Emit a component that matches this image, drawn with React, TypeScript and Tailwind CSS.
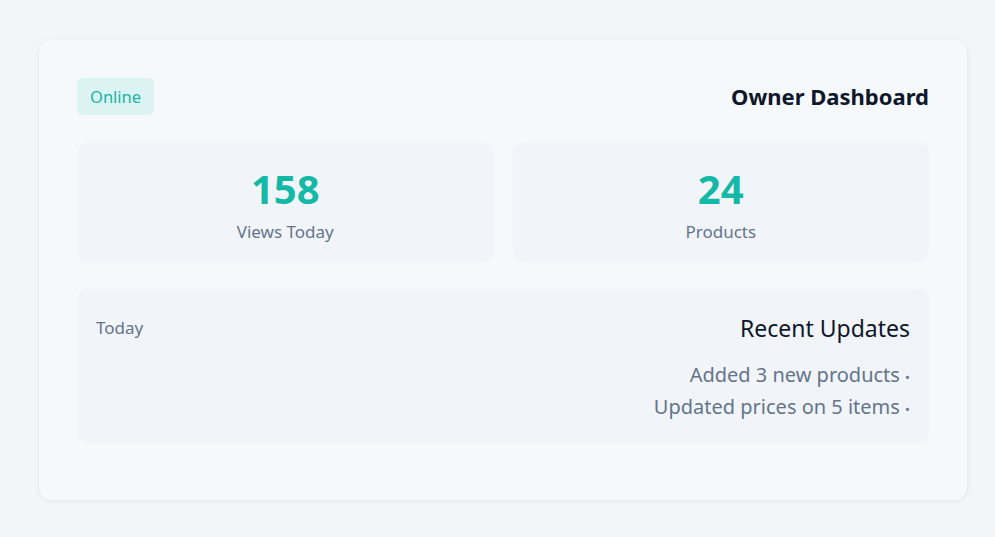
const updates = ["Added 3 new products", "Updated prices on 5 items"];

const stats = [
  { value: "158", label: "Views Today" },
  { value: "24", label: "Products" },
];

export default function App() {
  return (
    <div
      className="min-h-[537px] bg-[#f2f6f9] pt-10 pl-[39px]"
      style={{ fontFamily: '"Noto Sans", "Open Sans", sans-serif' }}
    >
      <div className="w-[928px] rounded-xl bg-[#f5f9fc] px-[38px] pt-[38px] pb-[57px] shadow-[0_1px_4px_rgba(15,23,42,0.08)]">
        <div className="flex items-center justify-between">
          <span className="rounded-md bg-[#ddf3f3] px-[13px] py-[7px] text-[16.5px] leading-[23px] text-[#14b8a6]">
            Online
          </span>
          <h1 className="pb-[2px] text-[22px] font-bold leading-[28px] text-[#0f172a]">Owner Dashboard</h1>
        </div>

        <div className="mt-[27px] grid grid-cols-2 gap-[19px]">
          {stats.map((s) => (
            <div
              key={s.label}
              className="flex h-[120px] flex-col items-center justify-center rounded-xl bg-[#f1f5f9] pt-[4px]"
            >
              <div className="text-[40px] font-bold leading-[48px] text-[#14b8a6]">{s.value}</div>
              <div className="mt-[7px] text-[17px] leading-[24px] text-[#64748b]">{s.label}</div>
            </div>
          ))}
        </div>

        <div className="mt-[27px] flex h-[154px] justify-between rounded-xl bg-[#f1f5f9] px-[19px] pt-[24px]">
          <span className="pt-[2px] text-[17px] leading-[26px] text-[#64748b]">Today</span>
          <div className="flex flex-col items-end">
            <h2 className="text-[23px] leading-[30px] text-[#0f172a]">Recent Updates</h2>
            <ul className="mt-[18px] flex flex-col items-end gap-[2px]">
              {updates.map((u) => (
                <li key={u} className="text-[20px] leading-[28px] text-[#64748b]">
                  {u} <span className="text-[13px]">•</span>
                </li>
              ))}
            </ul>
          </div>
        </div>
      </div>
    </div>
  );
}
